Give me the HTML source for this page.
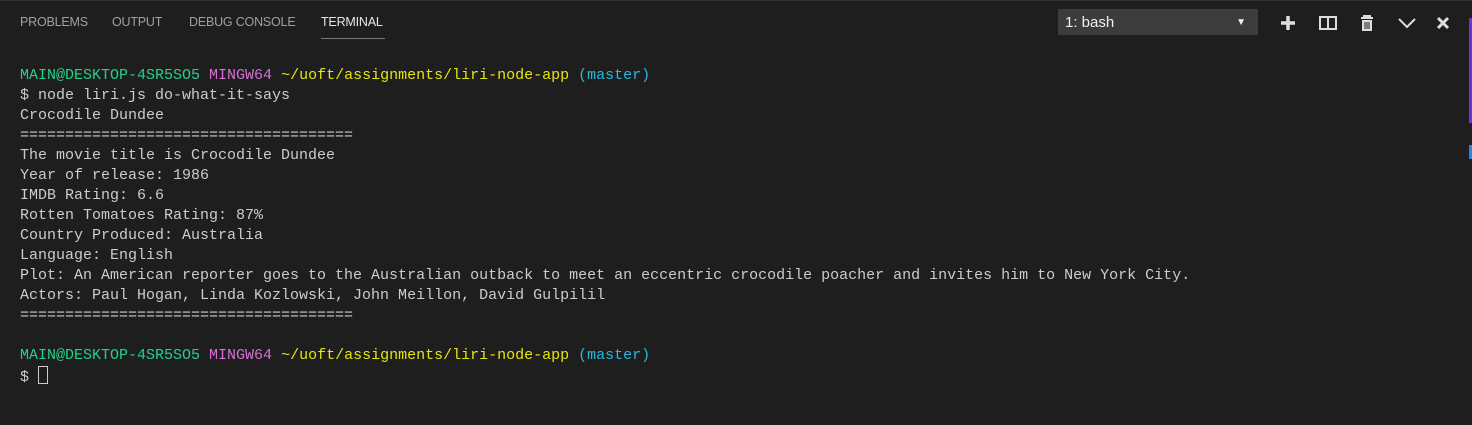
<!DOCTYPE html>
<html><head><style>
body{margin:0;width:1472px;height:425px;background:#1e1e1e;overflow:hidden;position:relative;font-family:"Liberation Sans",sans-serif}
.top{position:absolute;left:0;top:0;width:1472px;height:1px;background:#333}
.tab{position:absolute;top:15px;font-size:12.5px;color:#a0a0a0;letter-spacing:-0.2px}
.sel{position:absolute;left:1058px;top:9px;width:200px;height:26px;background:#3c3c3c;color:#f0f0f0;font-size:15px;line-height:28px;box-sizing:border-box;padding-left:7px}
.sel span{position:absolute;right:12px;top:0;font-size:10px}
.term{position:absolute;left:20px;top:66px;font-family:"Liberation Mono",monospace;font-size:15px;line-height:20px;color:#cccccc;white-space:pre}
.g{color:#23d18b}.m{color:#d670d6}.y{color:#e5e510}.c{color:#29b8db}
.cur{display:inline-block;width:8px;height:16px;border:1px solid #ccc;vertical-align:-3px}
</style></head><body>
<div class="top"></div>
<div class="tab" style="left:20px">PROBLEMS</div>
<div class="tab" style="left:112px">OUTPUT</div>
<div class="tab" style="left:189px">DEBUG CONSOLE</div>
<div class="tab" style="left:321px;color:#e7e7e7">TERMINAL</div>
<div style="position:absolute;left:321px;top:38px;width:64px;height:1px;background:#777"></div>
<div class="sel">1: bash<span>▼</span></div>
<svg style="position:absolute;left:1278px;top:12px" width="180" height="22" viewBox="0 0 180 22">
<path d="M10 4v14M3 11h14" stroke="#ddd" stroke-width="3.5"/>
<rect x="42" y="5" width="16" height="12" fill="none" stroke="#ddd" stroke-width="2"/><path d="M50 5v12" stroke="#ddd" stroke-width="2"/>
<path d="M83 6h12M86 6v-2h6v2" stroke="#ddd" stroke-width="2" fill="none"/><rect x="84" y="8" width="10" height="11" fill="#ddd"/><path d="M87 10v7M89 10v7M91 10v7" stroke="#1e1e1e" stroke-width="1"/>
<path d="M121 7l8 8 8-8" stroke="#ddd" stroke-width="2" fill="none"/>
<path d="M160 6l10 10M170 6l-10 10" stroke="#ddd" stroke-width="3"/>
</svg>
<div style="position:absolute;left:1469px;top:18px;width:3px;height:105px;background:#7030e0"></div>
<div style="position:absolute;left:1469px;top:145px;width:3px;height:14px;background:#1e88e5"></div>
<div class="term"><span class="g">MAIN@DESKTOP-4SR5SO5</span> <span class="m">MINGW64</span> <span class="y">~/uoft/assignments/liri-node-app</span> <span class="c">(master)</span>
$ node liri.js do-what-it-says
Crocodile Dundee
=====================================
The movie title is Crocodile Dundee
Year of release: 1986
IMDB Rating: 6.6
Rotten Tomatoes Rating: 87%
Country Produced: Australia
Language: English
Plot: An American reporter goes to the Australian outback to meet an eccentric crocodile poacher and invites him to New York City.
Actors: Paul Hogan, Linda Kozlowski, John Meillon, David Gulpilil
=====================================

<span class="g">MAIN@DESKTOP-4SR5SO5</span> <span class="m">MINGW64</span> <span class="y">~/uoft/assignments/liri-node-app</span> <span class="c">(master)</span>
$ <span class="cur"></span></div>
</body></html>
